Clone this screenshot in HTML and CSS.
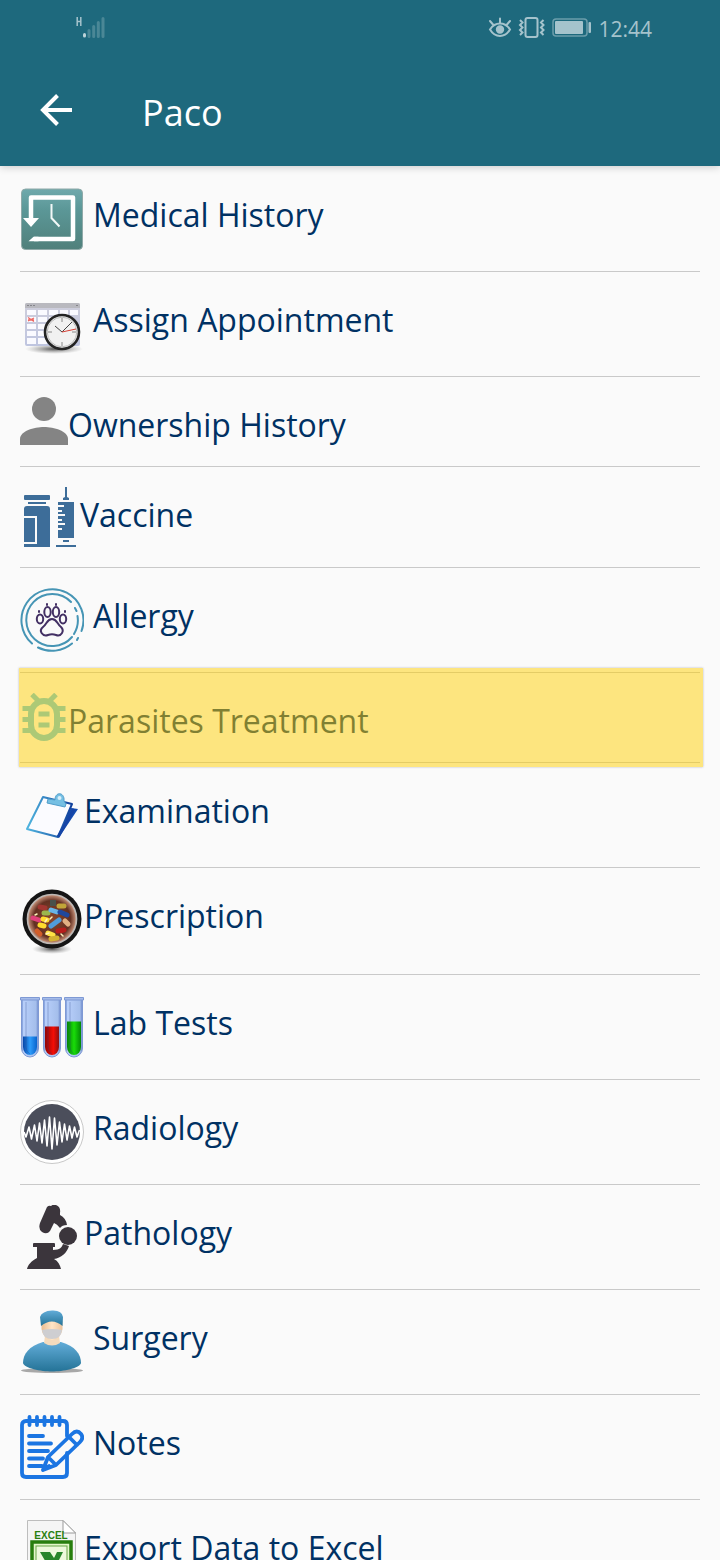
FILE: index.html
```
<!DOCTYPE html>
<html lang="en">
<head>
<meta charset="utf-8">
<meta name="viewport" content="width=device-width, initial-scale=1">
<title>Paco</title>
<link rel="stylesheet" href="styles.css">
</head>
<body>
<header class="top">
  <div class="status">
    <svg class="signal" width="30" height="24" viewBox="0 0 30 24" aria-hidden="true">
      <path d="M1.2 1v9M4.8 1v9M1 5.5h4" stroke="#a5c3cc" stroke-width="1.5" fill="none"/>
      <path d="M8.500 18.500v1.500" stroke="#bdd3d9" stroke-width="3" stroke-linecap="round"/>
      <path d="M13 14.500v6M17.700 10.500v10M22.300 6.500v14M27 2.500v18" stroke="#4a8796" stroke-width="3" stroke-linecap="round"/>
    </svg>
    <div class="status-end">
      <svg width="24" height="24" viewBox="0 0 24 24" fill="none" stroke="#a5c3cc" stroke-width="2" stroke-linecap="round" aria-hidden="true">
        <path d="M2 13.500C7 5.500 17 5.500 22 13.500C17 22 7 22 2 13.500Z"/><path d="M12 7V2.500M5 8.500 2 5M19 8.500l3-3.500"/><circle cx="12" cy="13.500" r="3.200" fill="#a5c3cc"/>
      </svg>
      <svg width="28" height="24" viewBox="0 0 28 24" fill="none" stroke="#a5c3cc" stroke-width="2" aria-hidden="true">
        <rect x="7.500" y="2" width="12" height="19" rx="2"/><path d="M2 4 4.500 6.500 2 9l2.500 2.500L2 14l2.500 2.500L2 19M25.500 4 23 6.500 25.500 9 23 11.500l2.500 2.500-2.500 2.500 2.500 2.500" stroke-width="2"/>
      </svg>
      <svg width="40" height="24" viewBox="0 0 40 24" aria-hidden="true">
        <rect x="1" y="3" width="34" height="17" rx="3" fill="none" stroke="#6b9dab" stroke-width="1.500"/><rect x="3" y="5" width="28" height="13" rx="1" fill="#a5c3cc"/><rect x="36.500" y="6" width="2.500" height="11" rx="1" fill="#a5c3cc"/>
      </svg>
      <span class="clock">12:44</span>
    </div>
  </div>
  <div class="bar">
    <button class="back" type="button" aria-label="Back">
      <svg width="32" height="32" viewBox="0 0 32 32" fill="none" stroke="#fff" stroke-width="4" aria-hidden="true"><path d="M32 16H3M17.500 1.500 3 16 17.500 30.500"/></svg>
    </button>
    <h1 class="title">Paco</h1>
  </div>
</header>
<main class="content">
  <ul class="menu">
    <li><a class="row spaced" href="#history">
      <svg width="64" height="64" viewBox="0 0 64 64" aria-hidden="true">
        <defs><linearGradient id="teal" x2="0" y2="1"><stop stop-color="#6fa9ac"/><stop offset=".35" stop-color="#5b9797"/><stop offset="1" stop-color="#50807b"/></linearGradient></defs>
        <rect x="1.500" y="2" width="61" height="60.500" rx="4" fill="url(#teal)" stroke="#8fa9a8"/>
        <path d="M11 32V10.500H53V52H14" fill="none" stroke="#fff" stroke-width="4.500" stroke-linejoin="round"/>
        <path d="M3 31H19L11 40ZM8.500 54.250l5-4.500h5v4.500Z" fill="#fff"/>
        <path d="M31.500 17v14l8 8.500" fill="none" stroke="#f1f8f7" stroke-width="2"/>
      </svg><span>Medical History</span></a></li>
    <li><a class="row spaced" href="#appointment">
      <svg width="64" height="64" viewBox="0 0 64 64" aria-hidden="true">
        <defs><linearGradient id="cal" x2="0" y2="1"><stop stop-color="#cfcfdc"/><stop offset="1" stop-color="#bfc5e0"/></linearGradient><radialGradient id="shade"><stop stop-color="#555"/><stop offset="1" stop-color="#999" stop-opacity="0"/></radialGradient></defs>
        <g transform="translate(0 5)">
        <ellipse cx="34" cy="52" rx="29" ry="5" fill="url(#shade)"/>
        <rect x="5" y="6" width="55" height="43" rx="2" fill="url(#cal)"/>
        <path d="M5 11V8q0-2 2-2h51q2 0 2 2v3Z" fill="#b9b9bf"/><path d="M7 8.500h9M56 8.500h2" stroke="#85858b" stroke-dasharray="2 1"/>
        <path d="M7 13h9v5H7zM18 13h9v5H18zM29 13h9v5H29zM40 13h8v5H40zM50 13h8v5H50zM7 20h9v5H7zM18 20h9v5H18zM29 20h9v5H29zM7 27h9v5H7zM18 27h9v5H18zM7 34h9v5H7zM18 34h9v5H18zM7 41h9v6H7zM18 41h9v6H18z" fill="#fafaff"/>
        <path d="m8 20.500 6 4M14 21l-6 3M8 23h6" stroke="#ed6a65" stroke-width="1.300"/>
        <circle cx="42" cy="35" r="17" fill="#f1f1f1" stroke="#242424" stroke-width="2.600"/><circle cx="42" cy="35" r="14.800" fill="none" stroke="#bbb"/>
        <path d="M42 21v4M42 45v4M28 35h4M52 35h4" stroke="#888"/><path d="m35 29 7 6 10-10" fill="none" stroke="#444"/><path d="m42 35 14-3" stroke="#d64035"/>
        </g>
      </svg><span>Assign Appointment</span></a></li>
    <li><a class="row" href="#ownership">
      <svg width="48" height="48" viewBox="0 0 48 48" fill="#848484" aria-hidden="true"><circle cx="24" cy="12" r="12"/><path d="M0 48V42C0 34 14 30 24 30S48 34 48 42V48Z"/></svg><span>Ownership History</span></a></li>
    <li><a class="row" href="#vaccine">
      <svg width="60" height="60" viewBox="0 0 60 60" fill="#3d6d99" aria-hidden="true">
        <rect x="4" y="8" width="26" height="5" rx="1"/><rect x="8" y="15" width="18" height="2"/><path d="M4 22q0-3 3-3H27q3 0 3 3V60H4V57H17V29H4ZM4 31H15V55H4Z"/>
        <path d="M45 0h2v10l2 1v2h-6v-2l2-1ZM38 15H54V51H38ZM43 53h6v2h-6ZM36 58H56V60H36Z"/>
        <path d="M38 19h6M38 24h4M38 28h7M38 33h4M38 37h7M38 42h4" stroke="#fafafa" stroke-width="2"/>
      </svg><span>Vaccine</span></a></li>
    <li><a class="row spaced" href="#allergy">
      <svg width="64" height="64" viewBox="0 0 64 64" fill="none" stroke="#4695b5" stroke-width="2" stroke-linecap="round" aria-hidden="true">
        <path d="M12 55.500A31 31 0 1 1 61.500 43M18 59.500A31 31 0 0 0 52 55.500M58 50l-1 2M51 14A26 26 0 1 0 52 49M57.500 28A26 26 0 0 1 54 46M55 20l1.500 3"/>
        <g stroke="#433064"><path d="M32 31C27 31 27 36 23 39C18 43 23 49 28 47C31 46 33 46 36 47C41 49 45 43 41 39C37 36 37 31 32 31Z"/><ellipse cx="27.500" cy="24" rx="3.200" ry="5"/><ellipse cx="36" cy="24" rx="3.200" ry="5"/><ellipse cx="20" cy="31" rx="3.200" ry="4.500"/><ellipse cx="43" cy="31" rx="3.200" ry="4.500"/><path d="M27 16v1M36 16v1M19 23v1M45 23v1"/></g>
      </svg><span>Allergy</span></a></li>
    <li><a class="row highlighted" href="#parasites" aria-current="true">
      <svg width="48" height="48" viewBox="0 0 48 48" fill="none" stroke="#58c2e8" aria-hidden="true">
        <rect x="11" y="8" width="26" height="37" rx="13" stroke-width="6"/><path d="M12 1.500 19 8.500M36 1.500 29 8.500M2.500 15.500H12M36 15.500h9.500M2.500 26.500H10M38 26.500h7.500M2.500 37.500H12M36 37.500h9.500M18.500 21H29.500M18.500 32H29.500" stroke-width="5"/>
      </svg><span>Parasites Treatment</span></a></li>
    <li><a class="row" href="#examination">
      <svg width="64" height="64" viewBox="0 0 64 64" aria-hidden="true">
        <defs><linearGradient id="clip" x2="1"><stop stop-color="#4fb5df"/><stop offset="1" stop-color="#103f9b"/></linearGradient></defs>
        <g transform="translate(0 8)"><path d="M51 17 58 18 40 45 37 47Z" fill="#154eb0"/><path d="M23 6 52 13 38 46 7 38Z" fill="#fbfbff" stroke="url(#clip)" stroke-width="2" stroke-linejoin="round"/>
        <path d="M38 46 54 18" stroke="#1645a6" stroke-width="3"/><path d="m28 8 7 1c0-9 10-8 9 1l2 3-1 3-18-4Z" fill="#75bfe3" stroke="#509dcb"/><circle cx="39.500" cy="7" r="2" fill="#d7effb"/></g>
      </svg><span>Examination</span></a></li>
    <li><a class="row" href="#prescription">
      <svg width="64" height="66" viewBox="0 0 64 66" aria-hidden="true">
        <defs><radialGradient id="lens"><stop stop-color="#8b482c"/><stop offset=".75" stop-color="#633022"/><stop offset="1" stop-color="#d19b82"/></radialGradient></defs>
        <ellipse cx="32" cy="61" rx="20" ry="5" fill="url(#shade)"/><circle cx="32" cy="31" r="29.500" fill="#151515"/><circle cx="32" cy="31" r="24.500" fill="url(#lens)" stroke="#bdb8b5" stroke-width="1.700"/>
        <g stroke-width="5" stroke-linecap="round"><path d="m20 19 5 1" stroke="#a13631"/><path d="m39 18 5 0" stroke="#c1a439"/><path d="m13 30 6 2" stroke="#e0417b"/><path d="m20 37 4 1M23 31l4 1" stroke="#ffdc2e"/><path d="m24 25 4 0" stroke="#9bb64d"/><path d="m31 22 6 2" stroke="#68b5e7"/><path d="m40 24 7 3" stroke="#20489d"/><path d="m31 38 8-6" stroke="#509ddb"/><path d="m28 45 5 2" stroke="#ffe244"/><path d="m38 43 6-1" stroke="#b71e1c"/><path d="m45 33 3 3" stroke="#e2b083"/><path d="m17 43 3 3" stroke="#d15d29"/><path d="m31 51 6-1" stroke="#d4b231"/></g>
        <path d="m25 34 2-3m3 0 2-2m-17-2 2-1m24 20 2 2m-17-2 3-1" stroke="#fff1bc" stroke-width="1.500" stroke-linecap="round"/>
        <path d="M30 12h6v6h-6z" fill="#49514b"/>
      </svg><span>Prescription</span></a></li>
    <li><a class="row spaced" href="#lab">
      <svg width="64" height="64" viewBox="0 0 64 64" aria-hidden="true">
        <defs><linearGradient id="glass"><stop stop-color="#6484c8"/><stop offset=".12" stop-color="#b8cffa"/><stop offset=".85" stop-color="#a4beeb"/><stop offset="1" stop-color="#6b86c9"/></linearGradient>
        <linearGradient id="blue"><stop stop-color="#0645a8"/><stop offset=".5" stop-color="#2d9cfa"/><stop offset="1" stop-color="#0964ce"/></linearGradient><linearGradient id="red"><stop stop-color="#8f0505"/><stop offset=".6" stop-color="#f50d05"/><stop offset="1" stop-color="#8e1010"/></linearGradient><linearGradient id="green"><stop stop-color="#078008"/><stop offset=".5" stop-color="#19dd08"/><stop offset="1" stop-color="#038706"/></linearGradient></defs>
        <g transform="translate(0 2)">
        <g stroke="#7e99d4"><path d="M1.500 2h17V51a8.500 9 0 0 1-17 0Z" fill="url(#glass)"/><path d="M23.500 2h17V51a8.500 9 0 0 1-17 0Z" fill="url(#glass)"/><path d="M45.500 2h17V51a8.500 9 0 0 1-17 0Z" fill="url(#glass)"/><path d="M.5.500h19V3H.5ZM22.500.500h19V3h-19ZM44.500.500h19V3h-19Z" fill="#a5bce9"/></g>
        <path d="M3 39.500H17V50a7 8 0 0 1-14 0Z" fill="url(#blue)"/><path d="M25 29.500H39V50a7 8 0 0 1-14 0Z" fill="url(#red)"/><path d="M47 24.500H61V50a7 8 0 0 1-14 0Z" fill="url(#green)"/>
        <path d="M6 5v45q0 5 4 7M28 5v45q0 5 4 7M50 5v45q0 5 4 7" fill="none" stroke="#243c81" stroke-opacity=".3"/>
        </g>
      </svg><span>Lab Tests</span></a></li>
    <li><a class="row spaced" href="#radiology">
      <svg width="64" height="64" viewBox="0 0 64 64" aria-hidden="true">
        <circle cx="32" cy="32" r="31.500" fill="#fff" stroke="#c8c8c8"/><circle cx="32" cy="32" r="28" fill="#4b4e5b"/>
        <path d="M4 32 6 37 9 27 11.500 39 14.500 25 17 41 19.500 23 22 43 24.500 20 27 46 29.500 17 32 49 34.500 18 37 45 39.500 22 42 42 44.500 24 47 40 49.500 26 52 38 54.500 27 57 37 59.500 30" fill="none" stroke="#fff" stroke-width="1.600" stroke-linejoin="round"/>
      </svg><span>Radiology</span></a></li>
    <li><a class="row" href="#pathology">
      <svg width="64" height="64" viewBox="0 0 64 64" fill="#3b353c" aria-hidden="true">
        <path d="M27 2Q29 0 31 1Q33-1 36 0Q41 2 40 8L40 10Q46 13 47 20Q42 20 40 23Q37 19 34 18L30 26Q27 30 22 27Q18 24 20 18Z"/><circle cx="48" cy="31" r="9"/>
        <path d="M13 39q0-1 1-1H34q1 0 1 1v3h-2v3c7 0 9-3 10-6l6 2c-2 7-8 12-15 13 4 2 6 6 7 10H7c1-4 4-8 10-11V42h-4Z"/>
      </svg><span>Pathology</span></a></li>
    <li><a class="row spaced" href="#surgery">
      <svg width="64" height="64" viewBox="0 0 64 64" aria-hidden="true">
        <defs><linearGradient id="gown" x2="0" y2="1"><stop stop-color="#62acd8"/><stop offset="1" stop-color="#247397"/></linearGradient><linearGradient id="skin"><stop stop-color="#e9bd91"/><stop offset=".5" stop-color="#ffe5c6"/><stop offset="1" stop-color="#eac49e"/></linearGradient></defs>
        <ellipse cx="32" cy="60.500" rx="31" ry="2.500" fill="#a8a8a8"/><path d="M23 32C9 36 3 44 3 53C4 58 21 61.500 32 61.500S60 58 61 53C61 44 55 36 41 32Z" fill="url(#gown)"/>
        <path d="M25 26h14l1 7q-8 5-16 0Z" fill="#f4dbbd"/><path d="M21.500 11H42.500V19Q41 29 32 30Q23 29 21.500 19Z" fill="url(#skin)"/>
        <path d="M22 20q10-2 20 0-1 9-10 9t-10-9Z" fill="#ceced1"/><path d="M20 7Q22 1 32 0.500T43 7L42.500 16q-10.500-9-21.500 0Z" fill="url(#gown)"/>
      </svg><span>Surgery</span></a></li>
    <li><a class="row spaced" href="#notes">
      <svg width="64" height="64" viewBox="0 0 64 64" fill="none" stroke="#1b75e2" stroke-width="3.800" stroke-linecap="round" stroke-linejoin="round" aria-hidden="true">
        <path d="M47 21V10q0-4-4-4H6Q2 6 2 10V58q0 4 4 4H43q4 0 4-4V38M9.500 2v8M17 2v8M24.500 2v8M32 2v8M39.500 2v8M9 21H23M9 28.500H31M9 36H28M9 43.500H23M9 51H22"/><path d="M28 42 52 19Q57 14 61 19Q64 23 60 27L36 50 23 55ZM28 42l8 8M49 22l8 8M23 55l6-4"/>
      </svg><span>Notes</span></a></li>
    <li><a class="row" href="#export">
      <svg width="64" height="64" viewBox="0 0 64 64" aria-hidden="true">
        <path d="M7.500.500H43L55.500 13V63.500h-48Z" fill="#f5f5f5" stroke="#bdbdbd"/><path d="M43 .5V13H55.500Z" fill="#fff" stroke="#999"/>
        <text x="31" y="18.500" class="excel-label" text-anchor="middle">EXCEL</text>
        <rect x="12" y="22" width="39" height="40" fill="#e3f6ca" stroke="#277e0e" stroke-width="3.500"/><rect x="16" y="26" width="31" height="34" fill="#edf9dc" stroke="#68a548"/>
        <path d="M20 32h10l4 6 3-6h6l-6 12 9 14H35l-4-7-5 7h-8l9-14Z" fill="#27862a"/>
      </svg><span>Export Data to Excel</span></a></li>
  </ul>
</main>
</body>
</html>
```
FILE: styles.css
```
* { box-sizing: border-box; }

body {
  margin: 0;
  height: 100vh;
  display: flex;
  flex-direction: column;
  background: #fafafa;
  color: #003163;
  font-family: "Open Sans", "Noto Sans", sans-serif;
}

.top {
  flex: none;
  background: #1e697d;
  color: #fff;
  box-shadow: 0 1px 8px rgba(0, 0, 0, .2);
  z-index: 1;
}

.status {
  height: 56px;
  padding: 0 68px 0 76px;
  display: flex;
  justify-content: space-between;
  align-items: center;
}

.status-end {
  display: flex;
  align-items: center;
  gap: 6px;
  color: #a5c3cc;
}

.clock {
  padding-top: 2px;
  font-size: 21px;
  line-height: 24px;
}

.bar {
  height: 110px;
  padding: 0 40px 2px;
  display: flex;
  align-items: center;
  gap: 70px;
}

.back {
  display: flex;
  padding: 0;
  border: 0;
  background: none;
}

.title {
  margin: 0;
  padding-top: 6px;
  font-size: 36px;
  font-weight: 400;
  line-height: 48px;
}

.content {
  flex: 1;
  min-height: 0;
  overflow-y: auto;
  scrollbar-width: none;
}

.menu {
  margin: 0;
  padding: 1px 20px 0;
  list-style: none;
}

.row {
  position: relative;
  display: flex;
  align-items: flex-start;
  min-height: 90px;
  padding: 20px 0;
  border-bottom: 1px solid #c9c9c9;
  color: inherit;
  font-size: 32px;
  line-height: 40px;
  text-decoration: none;
}

.row svg { flex: none; }
.row span { padding-top: 8px; }
.spaced { gap: 9px; }

.highlighted::after {
  content: "";
  position: absolute;
  inset: -5px -3px -5px -1px;
  background: rgba(255, 208, 4, .5);
  box-shadow: 0 0 2px rgba(60, 60, 80, .35);
}

.excel-label {
  font: bold 10px "Liberation Sans", sans-serif;
  fill: #2b8010;
}
```
